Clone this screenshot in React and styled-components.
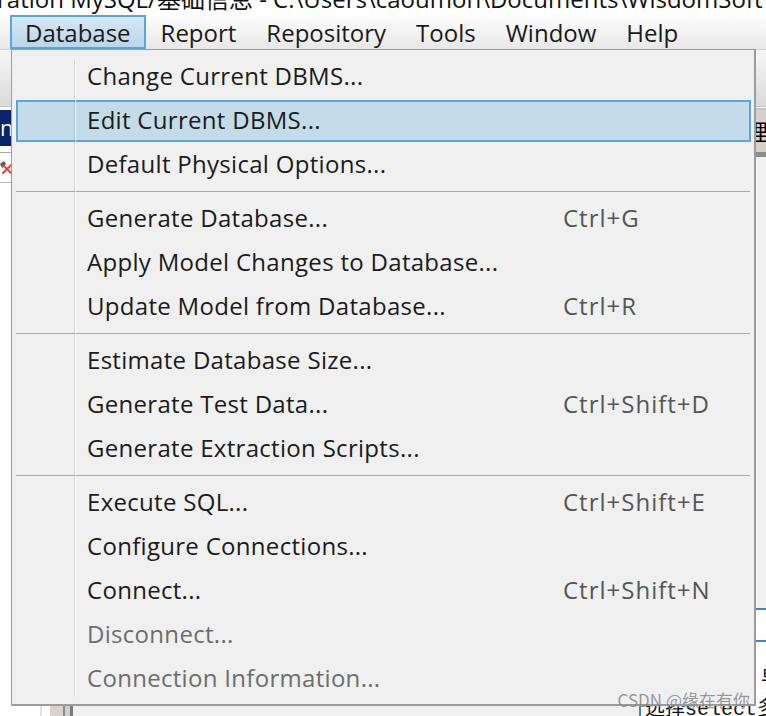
import React from 'react';
import styled, { createGlobalStyle } from 'styled-components';

const GlobalStyle = createGlobalStyle`
  html, body {
    margin: 0;
    padding: 0;
    background: #f0f0f0;
  }
  body {
    font-family: "Open Sans", "Noto Sans CJK SC", sans-serif;
  }
`;

const menuBarItems = ['Database', 'Report', 'Repository', 'Tools', 'Window', 'Help'];

const menuGroups = [
  [
    { label: 'Change Current DBMS...' },
    { label: 'Edit Current DBMS...', active: true },
    { label: 'Default Physical Options...' },
  ],
  [
    { label: 'Generate Database...', shortcut: 'Ctrl+G' },
    { label: 'Apply Model Changes to Database...' },
    { label: 'Update Model from Database...', shortcut: 'Ctrl+R' },
  ],
  [
    { label: 'Estimate Database Size...' },
    { label: 'Generate Test Data...', shortcut: 'Ctrl+Shift+D' },
    { label: 'Generate Extraction Scripts...' },
  ],
  [
    { label: 'Execute SQL...', shortcut: 'Ctrl+Shift+E' },
    { label: 'Configure Connections...' },
    { label: 'Connect...', shortcut: 'Ctrl+Shift+N' },
    { label: 'Disconnect...', disabled: true },
    { label: 'Connection Information...', disabled: true },
  ],
];

const App = () => {
  return (
    <>
      <GlobalStyle />
      <Window>
        <TitleBar>
          <TitleText>ration MySQL/基础信息 - C:\Users\caoumon\Documents\WisdomSoft</TitleText>
        </TitleBar>

        <MenuBar>
          {menuBarItems.map((item, i) => (
            <MenuBarItem key={item} $open={i === 0}>{item}</MenuBarItem>
          ))}
        </MenuBar>

        <Toolbar />

        <TabRow>
          <NavyTab>n</NavyTab>
          <BeigeTab>理</BeigeTab>
        </TabRow>

        <Workspace>
          <LeftPane>
            <IconRow>
              <DeleteIcon />
            </IconRow>
          </LeftPane>
          <ScrollBar />
          <CenterPane />
          <RightPane>
            <TextArea>
              <TextField />
              <TextBody>
                <TextLine $indent={116}>单选</TextLine>
                <TextLine>选择select多选</TextLine>
              </TextBody>
            </TextArea>
          </RightPane>
        </Workspace>

        <DropMenu>
          {menuGroups.map((group, gi) => (
            <React.Fragment key={gi}>
              {gi > 0 && <Separator />}
              {group.map((item) => (
                <MenuItem key={item.label} $active={item.active} $disabled={item.disabled}>
                  <ItemLabel>{item.label}</ItemLabel>
                  <Shortcut>{item.shortcut}</Shortcut>
                </MenuItem>
              ))}
            </React.Fragment>
          ))}
        </DropMenu>

        <Watermark>CSDN @缘在有你</Watermark>
      </Window>
    </>
  );
};

export default App;

const DeleteIcon = () => (
  <svg width="12" height="13" viewBox="0 0 12 13">
    <path d="M0 3 L4 0 L6 3 L2 7 Z" fill="#555" />
    <path d="M3 4 L11 12 M11 4 L3 12" stroke="#e8442e" strokeWidth="2" strokeLinecap="round" />
  </svg>
);

const Window = styled.div`
  position: relative;
  width: 766px;
  height: 716px;
  overflow: hidden;
  display: flex;
  flex-direction: column;
  background: #f0f0f0;
`;

const TitleBar = styled.div`
  height: 15px;
  flex-shrink: 0;
  overflow: hidden;
  background: #ffffff;
  white-space: nowrap;
`;

const TitleText = styled.div`
  margin: -13px 0 0 -3px;
  font-size: 24px;
  line-height: 24px;
  color: #111;
`;

const MenuBar = styled.div`
  display: flex;
  height: 34px;
  flex-shrink: 0;
  padding-left: 10px;
  background: linear-gradient(#fefefe, #e8e8e8);
`;

const MenuBarItem = styled.div`
  display: flex;
  align-items: center;
  padding: 0 13px;
  border: 2px solid ${({ $open }) => ($open ? '#5aa5db' : 'transparent')};
  background: ${({ $open }) => ($open ? 'linear-gradient(#d6e8f5, #bad6ea)' : 'none')};
  font-size: 24px;
  color: #1a1a1a;
`;

const Toolbar = styled.div`
  height: 56px;
  flex-shrink: 0;
  background: linear-gradient(#f7f7f7, #dadada);
  border-top: 1px solid #d6d6d6;
  border-bottom: 1px solid #c4c4c4;
`;

const TabRow = styled.div`
  display: flex;
  justify-content: space-between;
  height: 44px;
  flex-shrink: 0;
  border-top: 1px solid #ffffff;
  background: #ffffff;
`;

const NavyTab = styled.div`
  width: 11px;
  margin-top: 2px;
  height: 36px;
  background: #0b256c;
  color: #ffffff;
  font-size: 22px;
  line-height: 34px;
  text-align: right;
  overflow: hidden;
`;

const BeigeTab = styled.div`
  width: 40px;
  padding-left: 20px;
  box-sizing: border-box;
  border-top: 2px solid #c4c4c4;
  background: #d6d2ca;
  color: #000;
  font-family: "Noto Sans CJK SC", serif;
  font-size: 22px;
  line-height: 40px;
  overflow: hidden;
  white-space: nowrap;
`;

const Workspace = styled.div`
  flex: 1;
  display: flex;
  background: #ffffff;
`;

const LeftPane = styled.div`
  width: 40px;
  flex-shrink: 0;
  border-top: 1px solid #a8a8a8;
  border-right: 2px solid #e0e0e0;
  background: #ffffff;
`;

const IconRow = styled.div`
  display: flex;
  align-items: center;
  height: 29px;
  border-bottom: 1px solid #b4b4b4;
`;

const ScrollBar = styled.div`
  width: 23px;
  margin-left: 8px;
  flex-shrink: 0;
  background: linear-gradient(
    to right,
    #d8d4cc 0,
    #d8d4cc 13px,
    #8a8a8a 13px,
    #8a8a8a 15px,
    #d0d0d0 15px,
    #d0d0d0 20px,
    #7a7a7a 20px
  );
`;

const CenterPane = styled.div`
  flex: 1;
  background: #f0f0f0;
`;

const RightPane = styled.div`
  width: 127px;
  flex-shrink: 0;
  display: flex;
  flex-direction: column;
  justify-content: flex-end;
  border-top: 5px solid #8c8c8c;
  background: #f2f2f2;
`;

const TextArea = styled.div`
  height: 106px;
  border-top: 2px solid #3b86c8;
  border-left: 2px solid #3b86c8;
  background: #ffffff;
`;

const TextField = styled.div`
  height: 30px;
  border-bottom: 2px solid #3b86c8;
`;

const TextBody = styled.div`
  padding: 20px 0 0 4px;
`;

const TextLine = styled.div`
  padding-left: ${({ $indent }) => ($indent ? `${$indent}px` : '0')};
  font-family: "Liberation Mono", "Noto Sans CJK SC", monospace;
  font-size: 20px;
  line-height: 32px;
  color: #111;
  white-space: nowrap;
`;

const DropMenu = styled.div`
  position: absolute;
  left: 11px;
  top: 49px;
  width: 745px;
  height: 657px;
  box-sizing: border-box;
  display: flex;
  flex-direction: column;
  padding: 5px 3px 3px 4px;
  border-style: solid;
  border-color: #9c9c9c;
  border-width: 1px 2px 2px 1px;
  background: #f0f0f0;

  &::before {
    content: '';
    position: absolute;
    left: 62px;
    top: 9px;
    bottom: 7px;
    width: 1px;
    background: rgba(0, 0, 0, 0.11);
    box-shadow: 1px 0 0 rgba(255, 255, 255, 0.8);
    z-index: 1;
  }
`;

const MenuItem = styled.div`
  display: grid;
  grid-template-columns: 476px 1fr;
  align-items: center;
  flex-shrink: 0;
  height: 42px;
  margin: 1px 0;
  padding: 0 0 2px 69px;
  box-sizing: border-box;
  border: 2px solid ${({ $active }) => ($active ? '#5aa5db' : 'transparent')};
  background: ${({ $active }) => ($active ? '#c4dcea' : 'transparent')};
  font-size: 24px;
  line-height: 32px;
  letter-spacing: 0.3px;
  color: ${({ $disabled }) => ($disabled ? '#6d6d6d' : '#1b1b1b')};
  white-space: nowrap;
`;

const ItemLabel = styled.span``;

const Shortcut = styled.span`
  color: #555555;
  letter-spacing: 1px;
`;

const Separator = styled.div`
  flex-shrink: 0;
  height: 1px;
  margin: 4px 1px 5px 0;
  background: #a8a8a8;
`;

const Watermark = styled.div`
  position: absolute;
  right: 16px;
  bottom: 6px;
  font-family: "Noto Sans CJK SC", sans-serif;
  font-size: 17px;
  line-height: 20px;
  color: rgba(135, 135, 135, 0.85);
  white-space: nowrap;
`;
